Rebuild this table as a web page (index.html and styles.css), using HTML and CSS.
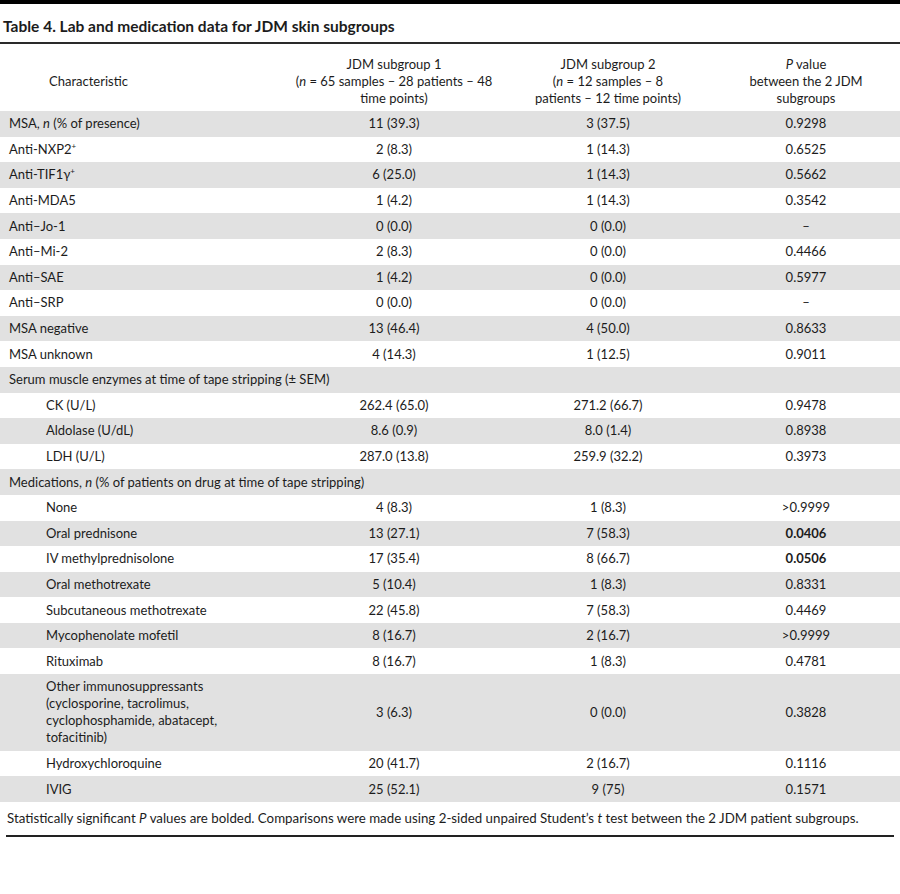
FILE: index.html
```html
<!DOCTYPE html>
<html lang="en">
<head>
<meta charset="utf-8">
<title>Table 4</title>
<link rel="stylesheet" href="styles.css">
</head>
<body>
<div class="page">
  <div class="title-bar">
    <h1 class="title">Table 4. Lab and medication data for JDM skin subgroups</h1>
  </div>
  <table class="data">
    <colgroup>
      <col class="c1"><col class="c2"><col class="c3"><col class="c4">
    </colgroup>
    <thead>
      <tr>
        <th class="h-char">Characteristic</th>
        <th>JDM subgroup 1<br>(<i>n</i> = 65 samples – 28 patients – 48<br>time points)</th>
        <th>JDM subgroup 2<br>(<i>n</i> = 12 samples – 8<br>patients – 12 time points)</th>
        <th><i>P</i> value<br>between the 2 JDM<br>subgroups</th>
      </tr>
    </thead>
    <tbody>
      <tr><td>MSA, <i>n</i> (% of presence)</td><td>11 (39.3)</td><td>3 (37.5)</td><td>0.9298</td></tr>
      <tr><td>Anti-NXP2<sup>+</sup></td><td>2 (8.3)</td><td>1 (14.3)</td><td>0.6525</td></tr>
      <tr><td>Anti-TIF1γ<sup>+</sup></td><td>6 (25.0)</td><td>1 (14.3)</td><td>0.5662</td></tr>
      <tr><td>Anti-MDA5</td><td>1 (4.2)</td><td>1 (14.3)</td><td>0.3542</td></tr>
      <tr><td>Anti–Jo-1</td><td>0 (0.0)</td><td>0 (0.0)</td><td>–</td></tr>
      <tr><td>Anti–Mi-2</td><td>2 (8.3)</td><td>0 (0.0)</td><td>0.4466</td></tr>
      <tr><td>Anti–SAE</td><td>1 (4.2)</td><td>0 (0.0)</td><td>0.5977</td></tr>
      <tr><td>Anti–SRP</td><td>0 (0.0)</td><td>0 (0.0)</td><td>–</td></tr>
      <tr><td>MSA negative</td><td>13 (46.4)</td><td>4 (50.0)</td><td>0.8633</td></tr>
      <tr><td>MSA unknown</td><td>4 (14.3)</td><td>1 (12.5)</td><td>0.9011</td></tr>
      <tr class="section"><td colspan="4">Serum muscle enzymes at time of tape stripping (± SEM)</td></tr>
      <tr><td class="ind">CK (U/L)</td><td>262.4 (65.0)</td><td>271.2 (66.7)</td><td>0.9478</td></tr>
      <tr><td class="ind">Aldolase (U/dL)</td><td>8.6 (0.9)</td><td>8.0 (1.4)</td><td>0.8938</td></tr>
      <tr><td class="ind">LDH (U/L)</td><td>287.0 (13.8)</td><td>259.9 (32.2)</td><td>0.3973</td></tr>
      <tr class="section"><td colspan="4">Medications, <i>n</i> (% of patients on drug at time of tape stripping)</td></tr>
      <tr><td class="ind">None</td><td>4 (8.3)</td><td>1 (8.3)</td><td>&gt;0.9999</td></tr>
      <tr><td class="ind">Oral prednisone</td><td>13 (27.1)</td><td>7 (58.3)</td><td><b>0.0406</b></td></tr>
      <tr><td class="ind">IV methylprednisolone</td><td>17 (35.4)</td><td>8 (66.7)</td><td><b>0.0506</b></td></tr>
      <tr><td class="ind">Oral methotrexate</td><td>5 (10.4)</td><td>1 (8.3)</td><td>0.8331</td></tr>
      <tr><td class="ind">Subcutaneous methotrexate</td><td>22 (45.8)</td><td>7 (58.3)</td><td>0.4469</td></tr>
      <tr><td class="ind">Mycophenolate mofetil</td><td>8 (16.7)</td><td>2 (16.7)</td><td>&gt;0.9999</td></tr>
      <tr><td class="ind">Rituximab</td><td>8 (16.7)</td><td>1 (8.3)</td><td>0.4781</td></tr>
      <tr><td class="ind">Other immunosuppressants<br>(cyclosporine, tacrolimus,<br>cyclophosphamide, abatacept,<br>tofacitinib)</td><td>3 (6.3)</td><td>0 (0.0)</td><td>0.3828</td></tr>
      <tr><td class="ind">Hydroxychloroquine</td><td>20 (41.7)</td><td>2 (16.7)</td><td>0.1116</td></tr>
      <tr><td class="ind">IVIG</td><td>25 (52.1)</td><td>9 (75)</td><td>0.1571</td></tr>
    </tbody>
  </table>
  <p class="note">Statistically significant <i>P</i> values are bolded. Comparisons were made using 2-sided unpaired Student’s <i>t</i> test between the 2 JDM patient subgroups.</p>
</div>
</body>
</html>
```

FILE: styles.css
```css
html, body {
  margin: 0;
  padding: 0;
  background: #ffffff;
}

body {
  font-family: Lato, "Open Sans", "Liberation Sans", sans-serif;
  color: #1c1c1c;
  font-size: 13px;
}

.page {
  width: 900px;
}

.title-bar {
  border-top: 4px solid #000;
  border-bottom: 2px solid #2a2a2a;
  height: 38px;
  display: flex;
  align-items: center;
}

.title {
  margin: 0;
  padding: 6px 0 0 3px;
  font-size: 15.5px;
  font-weight: 700;
  line-height: 20px;
}

.data {
  width: 900px;
  border-collapse: collapse;
  table-layout: fixed;
}

.c1 { width: 284px; }
.c2 { width: 220px; }
.c3 { width: 208px; }
.c4 { width: 188px; }

.data th {
  font-weight: 400;
  line-height: 17px;
  padding: 12px 0 4px;
  text-align: center;
  vertical-align: middle;
}

.data th.h-char {
  text-align: left;
  padding-left: 49px;
}

.data td {
  line-height: 17px;
  padding: 4.3px 0;
  text-align: center;
  vertical-align: middle;
}

.data td:first-child {
  text-align: left;
  padding-left: 9px;
}

.data td.ind {
  padding-left: 46px;
}

.data tbody tr:nth-child(odd) {
  background: #e1e1e1;
}

.data sup {
  font-size: 8px;
  line-height: 0;
  vertical-align: 5px;
}

.note {
  margin: 0 6px;
  padding: 8px 1px 8px;
  font-size: 13.3px;
  line-height: 17px;
  border-bottom: 2px solid #222;
}
```
